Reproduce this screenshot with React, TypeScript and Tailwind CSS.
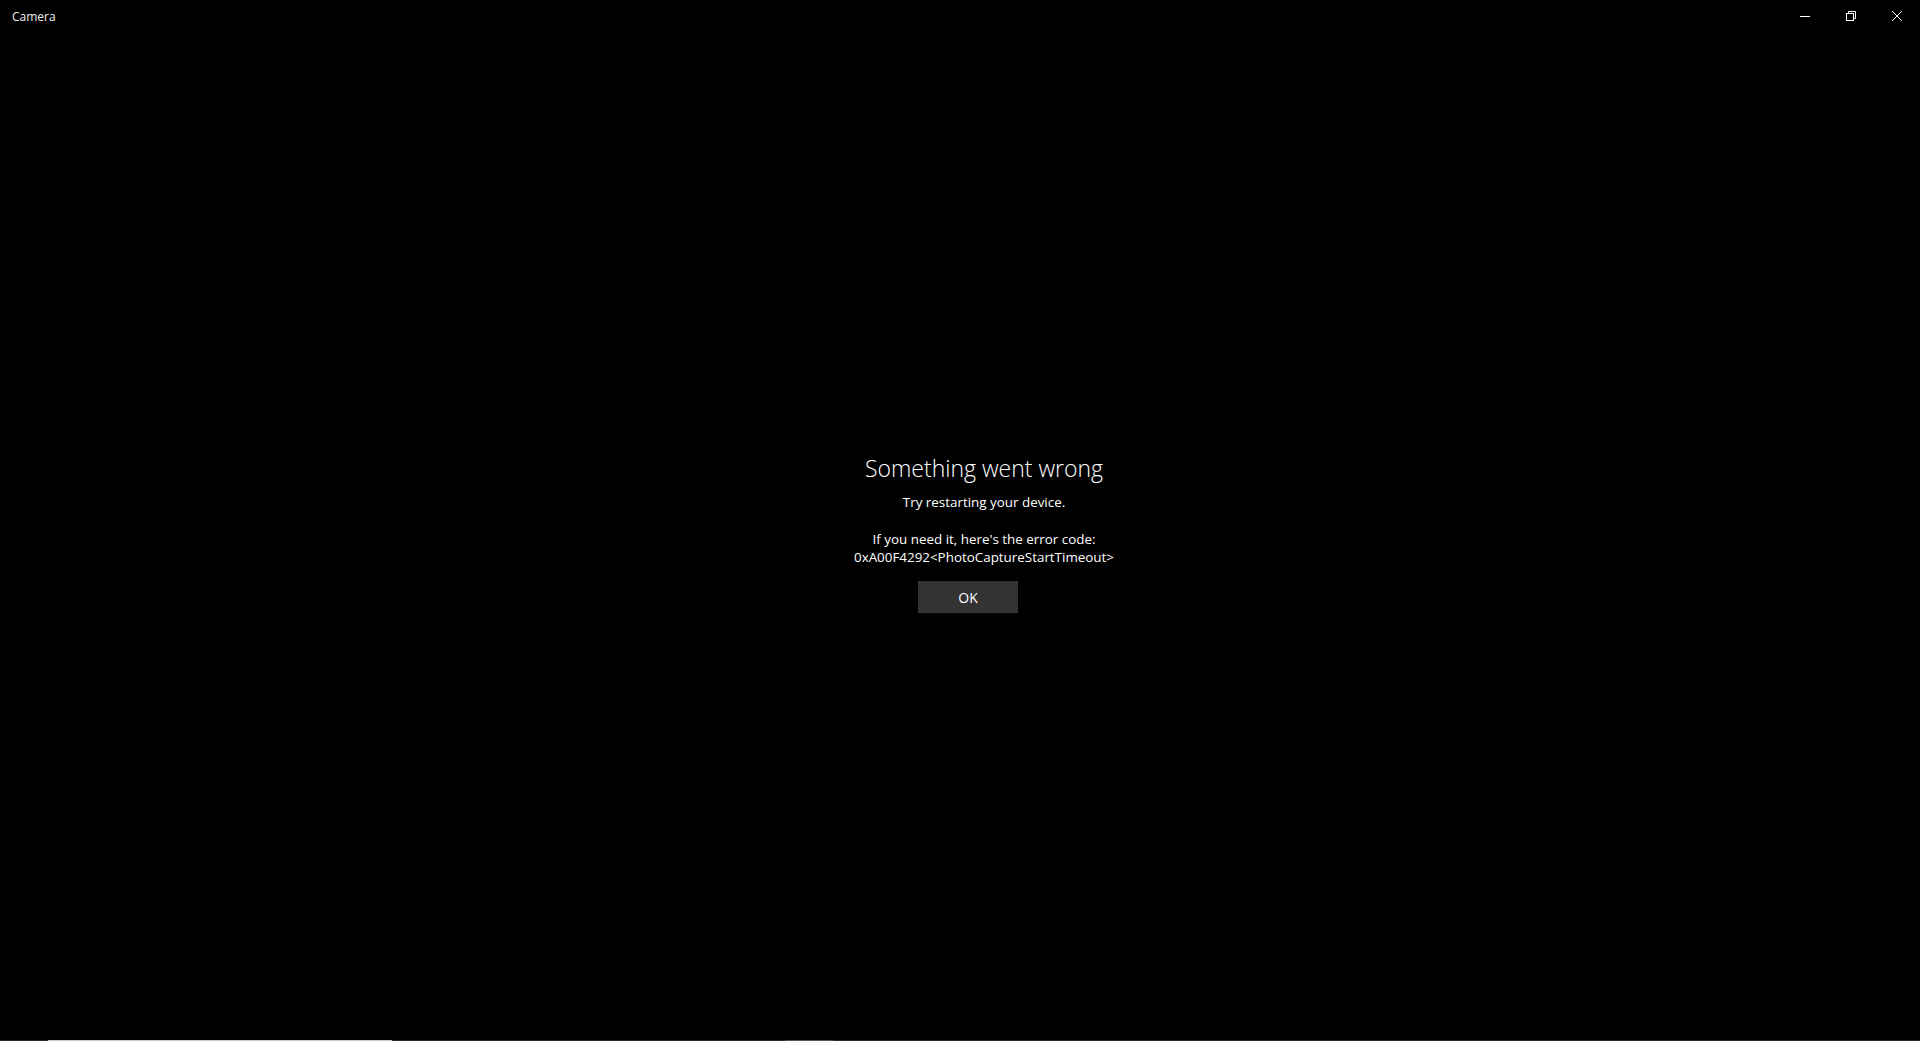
import React from "react";

export default function App() {
  const font = { fontFamily: '"Segoe UI", "Open Sans", "Noto Sans", sans-serif' };
  return (
    <div className="w-[1920px] h-[1041px] bg-black text-white flex flex-col overflow-hidden" style={font}>
      <div className="h-8 flex items-start shrink-0">
        <div className="pl-[12px] pt-[9px] text-[12px] leading-[16px] text-[#f0f0f0] flex-1">Camera</div>
        <div className="flex h-8">
          <div className="w-[46px] h-8 flex items-center justify-center">
            <svg width="10" height="10" viewBox="0 0 10 10"><path d="M0 5.5h10" stroke="#fff" strokeWidth="1" /></svg>
          </div>
          <div className="w-[46px] h-8 flex items-center justify-center">
            <svg width="10" height="10" viewBox="0 0 10 10" fill="none" stroke="#fff" strokeWidth="1">
              <rect x="0.5" y="2.5" width="7" height="7" />
              <path d="M2.5 2.5V0.5h7v7h-2" />
            </svg>
          </div>
          <div className="w-[46px] h-8 flex items-center justify-center">
            <svg width="10" height="10" viewBox="0 0 10 10" stroke="#fff" strokeWidth="1"><path d="M0 0L10 10M10 0L0 10" /></svg>
          </div>
        </div>
      </div>
      <div className="flex-1 flex flex-col items-center pl-[48px] pt-[420px]">
        <div className="text-[23px] leading-[32px] font-light">Something went wrong</div>
        <div className="text-[13.4px] leading-[20px] mt-[8px]">Try restarting your device.</div>
        <div className="text-[13.4px] leading-[18px] mt-[18px] text-center">
          <div>If you need it, here's the error code:</div>
          <div>0xA00F4292&lt;PhotoCaptureStartTimeout&gt;</div>
        </div>
        <div className="mt-[15px] mr-[32px] w-[100px] h-[32px] bg-[#333333] flex items-center justify-center text-[14px]">OK</div>
      </div>
      <div className="h-px w-full bg-[#2b2b2b] flex shrink-0">
        <div className="ml-[48px] w-[344px] h-px bg-[#c8c8c8]" />
        <div className="ml-[393px] w-[48px] h-px bg-[#555555]" />
      </div>
    </div>
  );
}
